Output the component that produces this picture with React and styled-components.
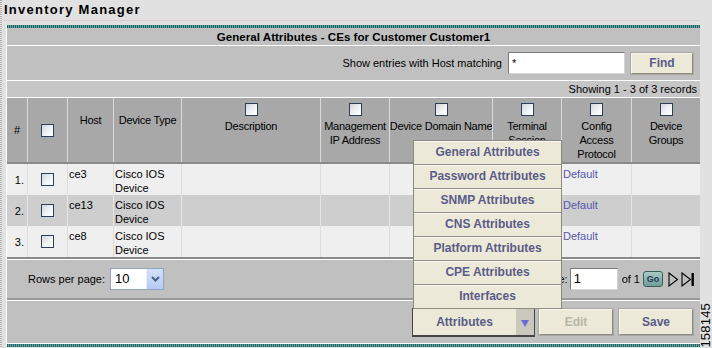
import React from 'react';
import styled, { createGlobalStyle } from 'styled-components';

const Global = createGlobalStyle`
  html, body { margin: 0; padding: 0; background: #e1e1e1; }
  body { font-family: "Liberation Sans", Arial, sans-serif; font-size: 11px; color: #000; }
  #root { width: 712px; height: 348px; overflow: hidden; }
  * { box-sizing: border-box; }
`;

const Page = styled.div`
  display: flex;
  width: 712px;
  height: 348px;
  background: #e1e1e1;
`;

const Rule = styled.div`
  flex: none;
  width: 3px;
  background:
    linear-gradient(90deg, transparent 2px, #e1e1e1 2px),
    repeating-linear-gradient(180deg, #a9a9a9 0 1px, #ececec 1px 2px);
`;

const Main = styled.div`
  width: 697px;
  display: flex;
  flex-direction: column;
`;

const Title = styled.div`
  height: 21px;
  line-height: 20px;
  padding-left: 1px;
  font-weight: bold;
  font-size: 13px;
  letter-spacing: 1.25px;
  border-bottom: 1px solid #d6cccc;
`;

const Panel = styled.div`
  margin: 4px 0 0 3px;
  border-left: 1px solid #fff;
  background: #c0c0c0;
  display: flex;
  flex-direction: column;
`;

const TealBar = styled.div`
  height: 3px;
  background: repeating-linear-gradient(90deg, #1d6262 0 1px, #6aa2a2 1px 2px);
`;

const TitleBar = styled.div`
  height: 18px;
  line-height: 18px;
  text-align: center;
  font-weight: bold;
  font-size: 11.6px;
  border-bottom: 1px solid #fff;
`;

const SearchRow = styled.div`
  height: 35px;
  display: flex;
  align-items: center;
  justify-content: flex-end;
  padding-right: 7px;
  border-bottom: 1px solid #fff;
`;

const SearchLabel = styled.span`
  margin-right: 6px;
`;

const TextInput = styled.div`
  width: ${p => p.$w}px;
  height: 22px;
  background: #fff;
  border: 1px solid;
  border-color: #7a7a7a #d4d4d4 #d4d4d4 #7a7a7a;
  font-size: ${p => p.$fs || 11}px;
  line-height: 20px;
  padding-left: 3px;
`;

const Btn = styled.div`
  width: ${p => p.$w}px;
  height: ${p => p.$h || 26}px;
  margin-left: ${p => p.$ml || 0}px;
  background: #ece9d8;
  border: 1px solid;
  border-color: #f8f7f0 #8c8c84 #8c8c84 #f8f7f0;
  outline: 1px solid #a8a8a0;
  display: flex;
  align-items: center;
  justify-content: center;
  font-weight: bold;
  font-size: 12px;
  color: ${p => (p.$disabled ? '#b6b5a6' : '#5b5b89')};
`;

const ShowingRow = styled.div`
  height: 17px;
  line-height: 17px;
  text-align: right;
  padding-right: 3px;
  background: #c6c6c6;
  border-bottom: 1px solid #fff;
`;

const Table = styled.div`
  border-bottom: 2px solid #8a8a8a;
`;

const HeadRow = styled.div`
  display: grid;
  grid-template-columns: ${p => p.$cols};
  height: 66px;
  background: #a8a8a8;
  border-bottom: 2px solid #8a8a8a;
`;

const HeadCell = styled.div`
  display: flex;
  flex-direction: column;
  align-items: center;
  justify-content: ${p => (p.$mode === 'center' ? 'center' : 'flex-start')};
  padding-top: ${p => (p.$mode === 'top' ? 15 : p.$mode === 'check' ? 5 : 0)}px;
  border-right: 1px solid #dadada;
  text-align: center;
  line-height: 14px;
  letter-spacing: -0.25px;
  white-space: nowrap;
  overflow: hidden;
  &:last-child { border-right: none; }
`;

const HeadLabel = styled.div`
  margin-top: 3px;
`;

const BodyRow = styled.div`
  display: grid;
  grid-template-columns: ${p => p.$cols};
  height: ${p => p.$h}px;
  background: ${p => (p.$alt ? '#cecece' : '#efefef')};
`;

const Cell = styled.div`
  border-right: 1px solid ${p => (p.$altRow ? '#e6e6e6' : '#dcdcdc')};
  line-height: 14px;
  padding: ${p => (p.$center ? '0' : '3px 0 0 1px')};
  display: ${p => (p.$center ? 'flex' : 'block')};
  align-items: center;
  justify-content: ${p => (p.$right ? 'flex-end' : 'center')};
  padding-right: ${p => (p.$right ? 3 : 0)}px;
  white-space: nowrap;
  &:last-child { border-right: none; }
`;

const LinkText = styled.span`
  color: #5757ad;
`;

const Check = styled.span`
  display: inline-block;
  flex: none;
  width: 13px;
  height: 13px;
  border: 1px solid #2f4054;
  background: linear-gradient(135deg, #d3d7dc 0%, #f4f5f6 60%, #ffffff 100%);
`;

const PagRow = styled.div`
  height: 41px;
  border-top: 1px solid #fff;
  border-bottom: 2px solid #9a9a9a;
  display: flex;
  align-items: center;
  justify-content: space-between;
  padding: 0 5px 0 21px;
`;

const Group = styled.div`
  display: flex;
  align-items: center;
`;

const Select = styled.div`
  margin-left: 5px;
  width: 54px;
  height: 22px;
  background: #fff;
  border: 1px solid #8fa4bd;
  display: flex;
  align-items: stretch;
`;

const SelectValue = styled.div`
  flex: 1;
  font-size: 13px;
  line-height: 20px;
  padding-left: 4px;
`;

const SelectArrow = styled.div`
  width: 17px;
  background: linear-gradient(180deg, #d4e1fb, #b6cbf3);
  border-left: 1px solid #e8eefc;
  display: flex;
  align-items: center;
  justify-content: center;
`;

const Plain = styled.span`
  margin: 0 ${p => p.$mr || 0}px 0 ${p => p.$ml || 0}px;
`;

const GoBtn = styled.div`
  margin-left: 3px;
  width: 20px;
  height: 16px;
  border-radius: 3px;
  border: 1px solid #3b5e5b;
  background: linear-gradient(180deg, #a9cac6, #729d99);
  font-size: 9px;
  font-weight: bold;
  color: #1e3a50;
  display: flex;
  align-items: center;
  justify-content: center;
`;

const NavIcons = styled.div`
  display: flex;
  align-items: center;
  gap: 2px;
  margin-left: 5px;
`;

const ButtonRow = styled.div`
  height: 44px;
  border-top: 1px solid #fff;
  border-bottom: 1px solid #fff;
  display: flex;
  align-items: center;
  justify-content: flex-end;
  padding-right: 7px;
`;

const AttrWrap = styled.div`
  position: relative;
  width: 123px;
  height: 29px;
  display: flex;
  background: #ece9d8;
  border: 1px solid #454545;
  border-bottom-width: 2px;
  margin-top: 1px;
`;

const AttrLabel = styled.div`
  flex: 1;
  display: flex;
  align-items: center;
  justify-content: center;
  font-weight: bold;
  font-size: 12px;
  color: #5b5b89;
`;

const AttrArrow = styled.div`
  width: 18px;
  background: #cac7bd;
  display: flex;
  align-items: center;
  justify-content: center;
  padding-top: 3px;
`;

const Menu = styled.div`
  position: absolute;
  left: 0;
  bottom: 100%;
  width: 149px;
  z-index: 10;
  background: #ece9d8;
  border: 1px solid #8a8a82;
  border-bottom: none;
`;

const MenuItem = styled.div`
  height: 24px;
  line-height: 23px;
  text-align: center;
  font-weight: bold;
  font-size: 12px;
  color: #5b5b89;
  border-bottom: 1px solid #8e8d84;
  box-shadow: inset 0 1px 0 #f8f7f0;
`;

const SideLabel = styled.div`
  width: 12px;
  display: flex;
  flex-direction: column;
  justify-content: flex-end;
  align-items: center;
`;

const Rotated = styled.span`
  writing-mode: vertical-rl;
  transform: rotate(180deg);
  font-size: 13px;
  line-height: 12px;
  letter-spacing: 0.2px;
`;

const columns = [
  { key: 'num', w: 21, mode: 'center', label: ['#'] },
  { key: 'sel', w: 40, mode: 'center', check: true },
  { key: 'host', w: 46, mode: 'top', label: ['Host'] },
  { key: 'type', w: 68, mode: 'top', label: ['Device Type'] },
  { key: 'desc', w: 139, mode: 'check', check: true, label: ['Description'] },
  { key: 'mgmt', w: 69, mode: 'check', check: true, label: ['Management', 'IP Address'] },
  { key: 'ddn', w: 103, mode: 'check', check: true, label: ['Device Domain Name'] },
  { key: 'term', w: 69, mode: 'check', check: true, label: ['Terminal', 'Session'] },
  { key: 'cap', w: 70, mode: 'check', check: true, label: ['Config', 'Access', 'Protocol'] },
  { key: 'grp', w: 68, mode: 'check', check: true, label: ['Device', 'Groups'] },
];

const cols = columns.map(c => c.w + 'px').join(' ');

const rows = [
  { n: '1.', host: 'ce3', h: 31 },
  { n: '2.', host: 'ce13', h: 31 },
  { n: '3.', host: 'ce8', h: 31 },
];

const menuItems = [
  'General Attributes',
  'Password Attributes',
  'SNMP Attributes',
  'CNS Attributes',
  'Platform Attributes',
  'CPE Attributes',
  'Interfaces',
];

const Chevron = () => (
  <svg width="9" height="6" viewBox="0 0 9 6">
    <path d="M1 1 L4.5 4.5 L8 1" fill="none" stroke="#4b5f86" strokeWidth="2" />
  </svg>
);

const PlayOutline = ({ bar }) => (
  <svg width={bar ? 14 : 11} height="15" viewBox={`0 0 ${bar ? 14 : 11} 15`}>
    <path d="M1 1 L9.5 7.5 L1 14 Z" fill="none" stroke="#000" strokeWidth="1.1" />
    {bar && <rect x="10.5" y="1" width="2.4" height="13" fill="#000" />}
  </svg>
);

const DownTri = () => (
  <svg width="8" height="7" viewBox="0 0 8 7">
    <path d="M0 0 H8 L4 7 Z" fill="#6b6bd6" />
  </svg>
);

export default function App() {
  return (
    <Page>
      <Global />
      <Rule />
      <Main>
        <Title>Inventory Manager</Title>
        <Panel>
          <TealBar />
          <TitleBar>General Attributes - CEs for Customer Customer1</TitleBar>
          <SearchRow>
            <SearchLabel>Show entries with Host matching</SearchLabel>
            <TextInput $w={117}>*</TextInput>
            <Btn $w={62} $h={21} $ml={6}>Find</Btn>
          </SearchRow>
          <ShowingRow>Showing 1 - 3 of 3 records</ShowingRow>
          <Table>
            <HeadRow $cols={cols}>
              {columns.map(c => (
                <HeadCell key={c.key} $mode={c.mode}>
                  {c.check && <Check />}
                  {c.label && (
                    c.mode === 'check' ? (
                      <HeadLabel>{c.label.map(l => <div key={l}>{l}</div>)}</HeadLabel>
                    ) : (
                      c.label.map(l => <div key={l}>{l}</div>)
                    )
                  )}
                </HeadCell>
              ))}
            </HeadRow>
            {rows.map((r, i) => (
              <BodyRow key={r.n} $cols={cols} $alt={i === 1} $h={r.h}>
                <Cell $center $right $altRow={i === 1}>{r.n}</Cell>
                <Cell $center $altRow={i === 1}><Check /></Cell>
                <Cell $altRow={i === 1}>{r.host}</Cell>
                <Cell $altRow={i === 1}>Cisco IOS<br />Device</Cell>
                <Cell $altRow={i === 1} />
                <Cell $altRow={i === 1} />
                <Cell $altRow={i === 1} />
                <Cell $altRow={i === 1} />
                <Cell $altRow={i === 1}><LinkText>Default</LinkText></Cell>
                <Cell $altRow={i === 1} />
              </BodyRow>
            ))}
          </Table>
          <PagRow>
            <Group>
              <span>Rows per page:</span>
              <Select>
                <SelectValue>10</SelectValue>
                <SelectArrow><Chevron /></SelectArrow>
              </Select>
            </Group>
            <Group>
              <Plain $mr={2}>Page:</Plain>
              <TextInput $w={48} $fs={13}>1</TextInput>
              <Plain $ml={4}>of 1</Plain>
              <GoBtn>Go</GoBtn>
              <NavIcons>
                <PlayOutline />
                <PlayOutline bar />
              </NavIcons>
            </Group>
          </PagRow>
          <ButtonRow>
            <AttrWrap>
              <Menu>
                {menuItems.map(m => <MenuItem key={m}>{m}</MenuItem>)}
              </Menu>
              <AttrLabel>Attributes</AttrLabel>
              <AttrArrow><DownTri /></AttrArrow>
            </AttrWrap>
            <Btn $w={74} $ml={4} $disabled>Edit</Btn>
            <Btn $w={74} $ml={6}>Save</Btn>
          </ButtonRow>
          <TealBar />
        </Panel>
      </Main>
      <SideLabel>
        <Rotated>158145</Rotated>
      </SideLabel>
    </Page>
  );
}
